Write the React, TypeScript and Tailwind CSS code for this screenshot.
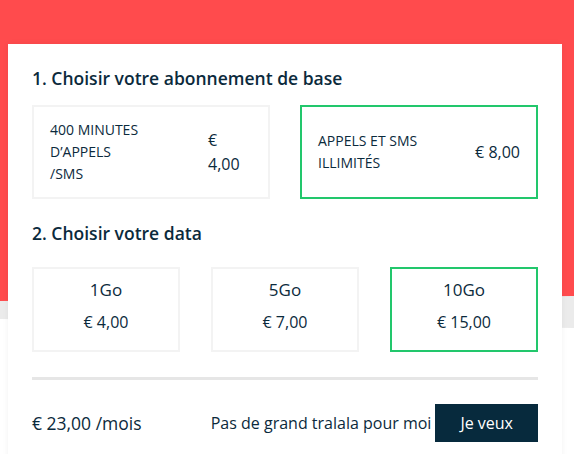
import React, { useState } from "react";

type Plan = { id: string; label: string; price: string; labelW: string; priceW: string };
type Data = { id: string; label: string; price: string };

const plans: Plan[] = [
  {
    id: "400",
    label: "400 minutes d’appels /SMS",
    price: "€ 4,00",
    labelW: "w-[96px]",
    priceW: "w-[44px]",
  },
  {
    id: "unlimited",
    label: "Appels et SMS illimités",
    price: "€ 8,00",
    labelW: "w-[112px]",
    priceW: "whitespace-nowrap",
  },
];

const dataOptions: Data[] = [
  { id: "1", label: "1Go", price: "€ 4,00" },
  { id: "5", label: "5Go", price: "€ 7,00" },
  { id: "10", label: "10Go", price: "€ 15,00" },
];

export default function App() {
  const [plan, setPlan] = useState("unlimited");
  const [data, setData] = useState("10");

  return (
    <div className="relative h-[454px] overflow-hidden bg-white font-['Open_Sans',sans-serif] text-[#0b2a3c]">
      {/* hero background with wave */}
      <svg
        className="absolute inset-x-0 top-0 h-[330px] w-full"
        viewBox="0 0 574 330"
        preserveAspectRatio="none"
      >
        <path d="M0 0H574V328L0 319Z" fill="#ebebeb" />
        <path d="M0 0H574V296L0 301Z" fill="#ff4b4d" />
      </svg>

      <div className="relative ml-2 mr-3 mt-[44px] bg-white px-6 pb-8 pt-[22px] shadow-[0_0_6px_rgba(0,0,0,0.06)]">
        <h2 className="text-[17.5px] font-semibold leading-6">
          1. Choisir votre abonnement de base
        </h2>
        <div className="mt-[15px] grid grid-cols-2 gap-[30px]">
          {plans.map((p) => (
            <button
              key={p.id}
              onClick={() => setPlan(p.id)}
              className={`flex items-center justify-between border-2 px-4 py-3 text-left ${
                plan === p.id ? "border-[#22c76c]" : "border-[#f3f3f3]"
              }`}
            >
              <span className={`${p.labelW} text-[14px] uppercase leading-[22px]`}>
                {p.label}
              </span>
              <span className={`${p.priceW} text-[16px] leading-6`}>{p.price}</span>
            </button>
          ))}
        </div>

        <h2 className="mt-[22px] text-[17.5px] font-semibold leading-6">
          2. Choisir votre data
        </h2>
        <div className="mt-[22px] grid grid-cols-3 gap-[31px]">
          {dataOptions.map((d) => (
            <button
              key={d.id}
              onClick={() => setData(d.id)}
              className={`flex h-[85px] flex-col items-center border-2 pt-[9px] ${
                data === d.id ? "border-[#22c76c]" : "border-[#f3f3f3]"
              }`}
            >
              <span className="text-[17px] leading-6">{d.label}</span>
              <span className="mt-2 text-[16px] leading-6">{d.price}</span>
            </button>
          ))}
        </div>

        <div className="mt-[25px] h-[3px] bg-[#e6e6e6]" />

        <div className="mt-6 flex items-center justify-between">
          <span className="text-[17.5px]">€ 23,00 /mois</span>
          <div className="flex items-center gap-1">
            <span className="text-[16px]">Pas de grand tralala pour moi</span>
            <button className="h-[38px] bg-[#072a3d] px-[25px] text-[16px] text-white">
              Je veux
            </button>
          </div>
        </div>
      </div>
    </div>
  );
}
